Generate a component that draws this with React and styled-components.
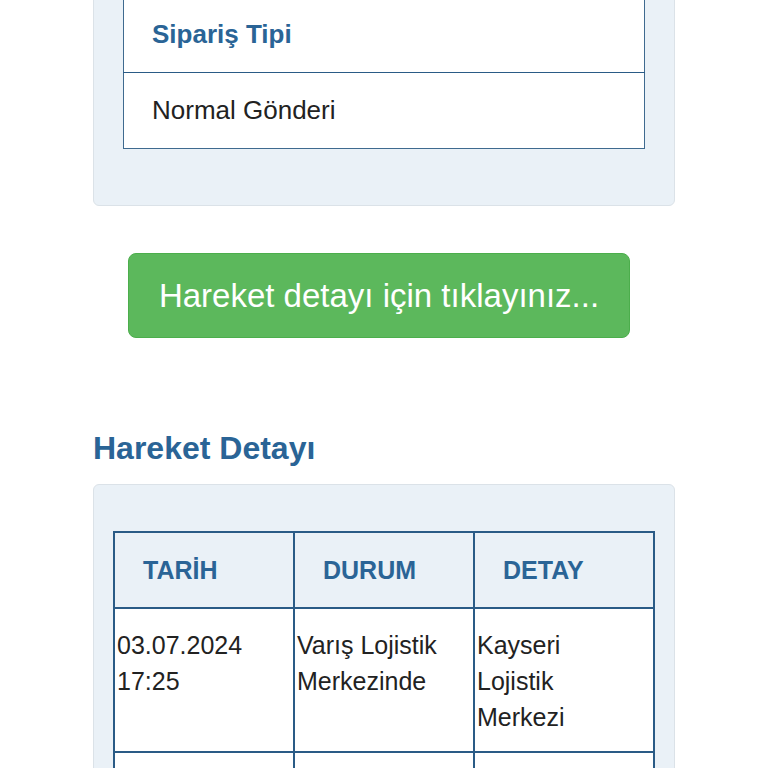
import React from "react";
import styled, { createGlobalStyle } from "styled-components";

const GlobalStyle = createGlobalStyle`
  html, body {
    margin: 0;
    padding: 0;
    background: #ffffff;
  }
  body {
    font-family: "Liberation Sans", Arial, Helvetica, sans-serif;
    color: #222222;
  }
`;

const Page = styled.div`
  width: 582px;
  margin: 0 auto;
  padding-bottom: 40px;
`;

const Well = styled.section`
  background: #eaf1f7;
  border: 1px solid #dbe2e8;
  border-radius: 6px;
  box-sizing: border-box;
  padding: ${(p) => p.$pad};
  margin-top: ${(p) => p.$top || "0"};
`;

const InfoTable = styled.table`
  width: 100%;
  border-collapse: collapse;
  background: #ffffff;
  border: 1px solid #3f6a8f;
`;

const InfoHead = styled.th`
  text-align: left;
  font-size: 26px;
  font-weight: 700;
  color: #2a6496;
  height: 76px;
  padding: 0 28px;
  border-bottom: 1px solid #2a5b86;
`;

const InfoCell = styled.td`
  font-size: 26px;
  height: 75px;
  padding: 0 28px;
  color: #222222;
`;

const ButtonRow = styled.div`
  padding: 47px 45px 0 35px;
`;

const DetailButton = styled.button`
  display: block;
  width: 100%;
  height: 85px;
  border: 1px solid #4cae4c;
  border-radius: 8px;
  background: #5cb85c;
  color: #ffffff;
  font-family: inherit;
  font-size: 33px;
  font-weight: 400;
  cursor: pointer;
`;

const SectionTitle = styled.h2`
  margin: 92px 0 18px;
  font-size: 32px;
  line-height: 36px;
  font-weight: 700;
  color: #2a6496;
`;

const MoveTable = styled.table`
  width: 100%;
  table-layout: fixed;
  border-collapse: collapse;
  background: #ffffff;
`;

const MoveHead = styled.th`
  text-align: left;
  background: #eaf1f7;
  border: 2px solid #2a5b86;
  height: 74px;
  padding: 0 28px;
  font-size: 25px;
  font-weight: 700;
  color: #2a6496;
`;

const MoveCell = styled.td`
  vertical-align: top;
  border: 2px solid #2a5b86;
  padding: 18px 12px 16px 2px;
  font-size: 25px;
  line-height: 36px;
  color: #222222;
`;

const moves = [
  {
    date: "03.07.2024 17:25",
    status: "Varış Lojistik Merkezinde",
    detail: "Kayseri Lojistik Merkezi",
  },
  {
    date: "03.07.2024 09:12",
    status: "Transfer Merkezinde",
    detail: "Ankara Transfer Merkezi",
  },
];

export default function App() {
  return (
    <>
      <GlobalStyle />
      <Page>
        <Well $pad="29px 29px 56px 29px" $top="-35px">
          <InfoTable>
            <thead>
              <tr>
                <InfoHead>Sipariş Tipi</InfoHead>
              </tr>
            </thead>
            <tbody>
              <tr>
                <InfoCell>Normal Gönderi</InfoCell>
              </tr>
            </tbody>
          </InfoTable>
        </Well>

        <ButtonRow>
          <DetailButton>Hareket detayı için tıklayınız...</DetailButton>
        </ButtonRow>

        <SectionTitle>Hareket Detayı</SectionTitle>

        <Well $pad="46px 19px 40px 19px">
          <MoveTable>
            <thead>
              <tr>
                <MoveHead>TARİH</MoveHead>
                <MoveHead>DURUM</MoveHead>
                <MoveHead>DETAY</MoveHead>
              </tr>
            </thead>
            <tbody>
              {moves.map((m) => (
                <tr key={m.date}>
                  <MoveCell>{m.date}</MoveCell>
                  <MoveCell>{m.status}</MoveCell>
                  <MoveCell>{m.detail}</MoveCell>
                </tr>
              ))}
            </tbody>
          </MoveTable>
        </Well>
      </Page>
    </>
  );
}
